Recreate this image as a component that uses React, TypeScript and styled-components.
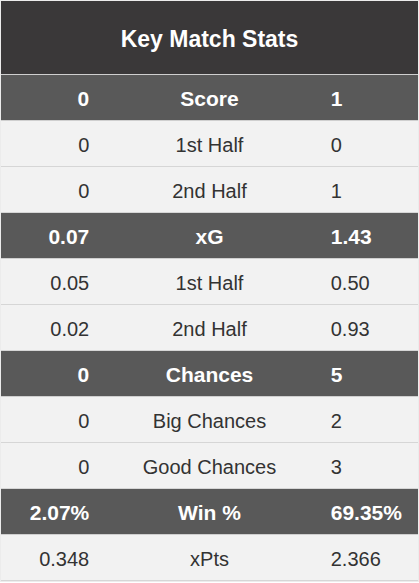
import React from "react";
import styled, { createGlobalStyle } from "styled-components";

const Global = createGlobalStyle`
  html, body { margin: 0; padding: 0; background: #ffffff; }
  body { font-family: "Liberation Sans", Arial, sans-serif; }
`;

const Card = styled.div`
  width: 419px;
  box-sizing: border-box;
  border: 1px solid #ececec;
  background: #ffffff;
`;

const Title = styled.div`
  height: 74px;
  box-sizing: border-box;
  padding-top: 3px;
  display: flex;
  align-items: center;
  justify-content: center;
  background: #3a3839;
  color: #ffffff;
  font-weight: bold;
  font-size: 23px;
  border-bottom: 1px solid #cfcfcf;
`;

const Row = styled.div<{ $head?: boolean }>`
  height: 46px;
  box-sizing: border-box;
  padding-top: 3px;
  display: grid;
  grid-template-columns: 1fr 2fr 1fr;
  align-items: center;
  border-bottom: 1px solid ${(p) => (p.$head ? "#cfcfcf" : "#d6d6d6")};
  background: ${(p) => (p.$head ? "#595959" : "#f2f2f2")};
  color: ${(p) => (p.$head ? "#ffffff" : "#333333")};
  font-weight: ${(p) => (p.$head ? "bold" : "normal")};
  font-size: ${(p) => (p.$head ? "21px" : "20px")};
`;

const Left = styled.div`
  text-align: right;
  padding-right: 16px;
`;

const Mid = styled.div`
  text-align: center;
`;

const Right = styled.div`
  text-align: left;
  padding-left: 17px;
`;

type R = [string, string, string, boolean?];

const rows: R[] = [
  ["0", "Score", "1", true],
  ["0", "1st Half", "0"],
  ["0", "2nd Half", "1"],
  ["0.07", "xG", "1.43", true],
  ["0.05", "1st Half", "0.50"],
  ["0.02", "2nd Half", "0.93"],
  ["0", "Chances", "5", true],
  ["0", "Big Chances", "2"],
  ["0", "Good Chances", "3"],
  ["2.07%", "Win %", "69.35%", true],
  ["0.348", "xPts", "2.366"],
];

export default function App() {
  return (
    <>
      <Global />
      <Card>
        <Title>Key Match Stats</Title>
        {rows.map(([a, b, c, h], i) => (
          <Row key={i} $head={!!h}>
            <Left>{a}</Left>
            <Mid>{b}</Mid>
            <Right>{c}</Right>
          </Row>
        ))}
      </Card>
    </>
  );
}
